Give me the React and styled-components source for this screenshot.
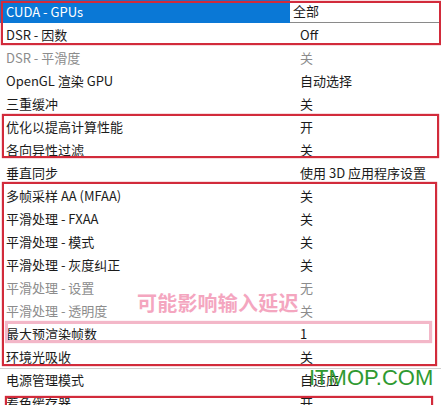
import React from 'react';
import styled, { createGlobalStyle } from 'styled-components';

const GlobalStyle = createGlobalStyle`
  html, body {
    margin: 0;
    padding: 0;
    background: #ffffff;
  }

  body {
    font-family: "Noto Sans CJK SC", "Noto Sans", sans-serif;
    font-size: 13px;
    color: #1b1b1b;
  }
`;

const settings = [
  { label: 'CUDA - GPUs', value: '全部', selected: true },
  { label: 'DSR - 因数', value: 'Off' },
  { label: 'DSR - 平滑度', value: '关', disabled: true },
  { label: 'OpenGL 渲染 GPU', value: '自动选择' },
  { label: '三重缓冲', value: '关' },
  { label: '优化以提高计算性能', value: '开' },
  { label: '各向异性过滤', value: '关' },
  { label: '垂直同步', value: '使用 3D 应用程序设置' },
  { label: '多帧采样 AA (MFAA)', value: '关' },
  { label: '平滑处理 - FXAA', value: '关' },
  { label: '平滑处理 - 模式', value: '关' },
  { label: '平滑处理 - 灰度纠正', value: '关' },
  { label: '平滑处理 - 设置', value: '无', disabled: true },
  { label: '平滑处理 - 透明度', value: '关', disabled: true },
  { label: '最大预渲染帧数', value: '1' },
  { label: '环境光吸收', value: '关', divider: true },
  { label: '电源管理模式', value: '自适应' },
  { label: '着色缓存器', value: '开' },
];

const Page = styled.div`
  position: relative;
  width: 441px;
  height: 405px;
  overflow: hidden;
`;

const List = styled.div`
  display: flex;
  flex-direction: column;
`;

const Group = styled.div`
  position: relative;

  &::after {
    content: '';
    position: absolute;
    top: ${(p) => p.$top}px;
    left: ${(p) => p.$left}px;
    right: ${(p) => p.$right}px;
    bottom: ${(p) => p.$bottom}px;
    border: ${(p) => p.$weight || 2}px solid ${(p) => p.$color || '#d22b3b'};
    box-shadow: 0 0 1px ${(p) => p.$color || '#d22b3b'};
    pointer-events: none;
    z-index: 2;
  }
`;

const Row = styled.div`
  display: grid;
  grid-template-columns: 290px 1fr;
  height: 23px;
  line-height: 23px;
  color: ${(p) => (p.$disabled ? '#8c8c8c' : '#1b1b1b')};
  box-shadow: ${(p) => (p.$divider ? '0 1px 0 #cfcfcf' : 'none')};
  white-space: nowrap;
`;

const Label = styled.div`
  padding-left: 6px;
  background: ${(p) => (p.$selected ? '#0a78d6' : 'transparent')};
  color: ${(p) => (p.$selected ? '#ffffff' : 'inherit')};
`;

const Value = styled.div`
  padding-left: 10px;
`;

const Dropdown = styled.div`
  padding-left: 3px;
  background: #ffffff;
  border-bottom: 1px solid #8a8a8a;
  line-height: 22px;
`;

const Warning = styled.div`
  position: absolute;
  left: 137px;
  top: 288px;
  font-size: 20px;
  font-weight: 700;
  letter-spacing: 0.2px;
  color: #f4a6bf;
  z-index: 3;
  pointer-events: none;
`;

const Watermark = styled.div`
  position: absolute;
  left: 309px;
  top: 365px;
  font-family: "Liberation Sans", Arial, sans-serif;
  font-size: 22px;
  color: #2f9a31;
  z-index: 3;
  pointer-events: none;
`;

const SettingRow = ({ item }) => (
  <Row $disabled={item.disabled} $divider={item.divider}>
    <Label $selected={item.selected}>{item.label}</Label>
    {item.selected ? <Dropdown>{item.value}</Dropdown> : <Value>{item.value}</Value>}
  </Row>
);

const rows = (from, to) =>
  settings.slice(from, to).map((item) => <SettingRow key={item.label} item={item} />);

const App = () => (
  <Page>
    <GlobalStyle />
    <List>
      <Group $top={1} $left={1} $right={0} $bottom={1}>
        {rows(0, 2)}
      </Group>
      {rows(2, 5)}
      <Group $top={-1} $left={2} $right={2} $bottom={3}>
        {rows(5, 7)}
      </Group>
      {rows(7, 8)}
      <Group $top={-2} $left={2} $right={4} $bottom={2}>
        {rows(8, 14)}
        <Group $top={-1} $left={5} $right={9} $bottom={2} $weight={3} $color="#f3b7c8">
          {rows(14, 15)}
        </Group>
        {rows(15, 16)}
      </Group>
      {rows(16, 17)}
      <Group $top={5} $left={5} $right={8} $bottom={-10}>
        {rows(17, 18)}
      </Group>
    </List>
    <Warning>可能影响输入延迟</Warning>
    <Watermark>ITMOP.COM</Watermark>
  </Page>
);

export default App;
